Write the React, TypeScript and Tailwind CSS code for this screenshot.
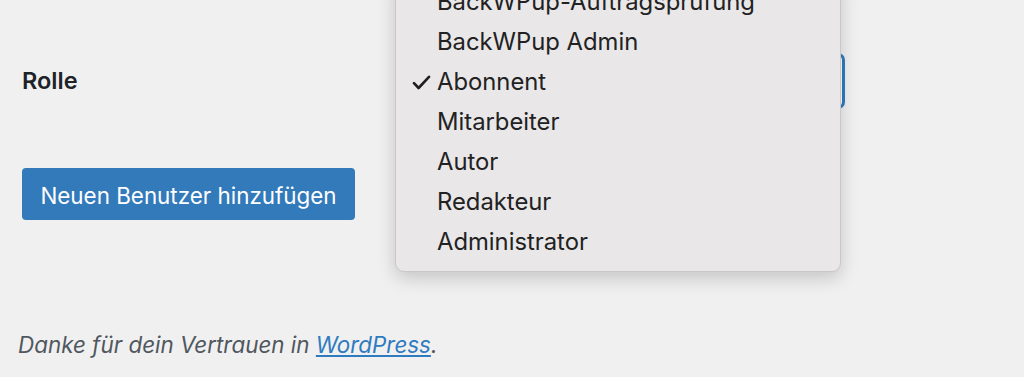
import React from "react";

const roles = [
  "BackWPup-Auftragsprüfung",
  "BackWPup Admin",
  "Abonnent",
  "Mitarbeiter",
  "Autor",
  "Redakteur",
  "Administrator",
];

function RoleMenu({ selected }: { selected: string }) {
  return (
    <div className="absolute left-[395px] top-[-25px] w-[446px] rounded-[9px] border border-[#c9c7c9] bg-[#e9e7e8] pt-[6px] pb-[9px] shadow-[0_6px_18px_rgba(0,0,0,0.18)]">
      {roles.map((role) => (
        <div key={role} className="relative flex h-[40px] items-center pl-[41px]">
          {role === selected && (
            <svg
              className="absolute left-[16px] top-[13px]"
              width="19"
              height="15"
              viewBox="0 0 19 15"
              fill="none"
            >
              <path
                d="M2 8.2 L6.6 13 L17 1.8"
                stroke="#1f1f1f"
                strokeWidth="2.6"
                strokeLinecap="round"
                strokeLinejoin="round"
              />
            </svg>
          )}
          <span className="text-[23.8px] leading-none text-[#222]">{role}</span>
        </div>
      ))}
    </div>
  );
}

export default function App() {
  return (
    <div
      className="relative h-[377px] w-[1024px] overflow-hidden bg-[#f0f0f1]"
      style={{ fontFamily: "Inter, 'Liberation Sans', sans-serif" }}
    >
      <div className="flex flex-col pl-[22px]">
        <div className="flex h-[162px] items-center">
          <div className="w-[373px] text-[23.5px] font-semibold text-[#1d2327]">Rolle</div>
          <div className="h-[56px] w-[450px] rounded-[7px] border-[3px] border-[#2f7bbf] bg-white" />
        </div>
        <div className="pt-[6px]">
          <button className="h-[52px] w-[333px] rounded-[4px] bg-[#337abb] pt-[3px] text-[22.4px] text-white">
            Neuen Benutzer hinzufügen
          </button>
        </div>
        <p className="mt-[108px] -ml-[4px] text-[22.4px] italic text-[#50575e]">
          Danke für dein Vertrauen in{" "}
          <a href="#" className="text-[#2f7bbf] underline">
            WordPress
          </a>
          .
        </p>
      </div>
      <RoleMenu selected="Abonnent" />
    </div>
  );
}
